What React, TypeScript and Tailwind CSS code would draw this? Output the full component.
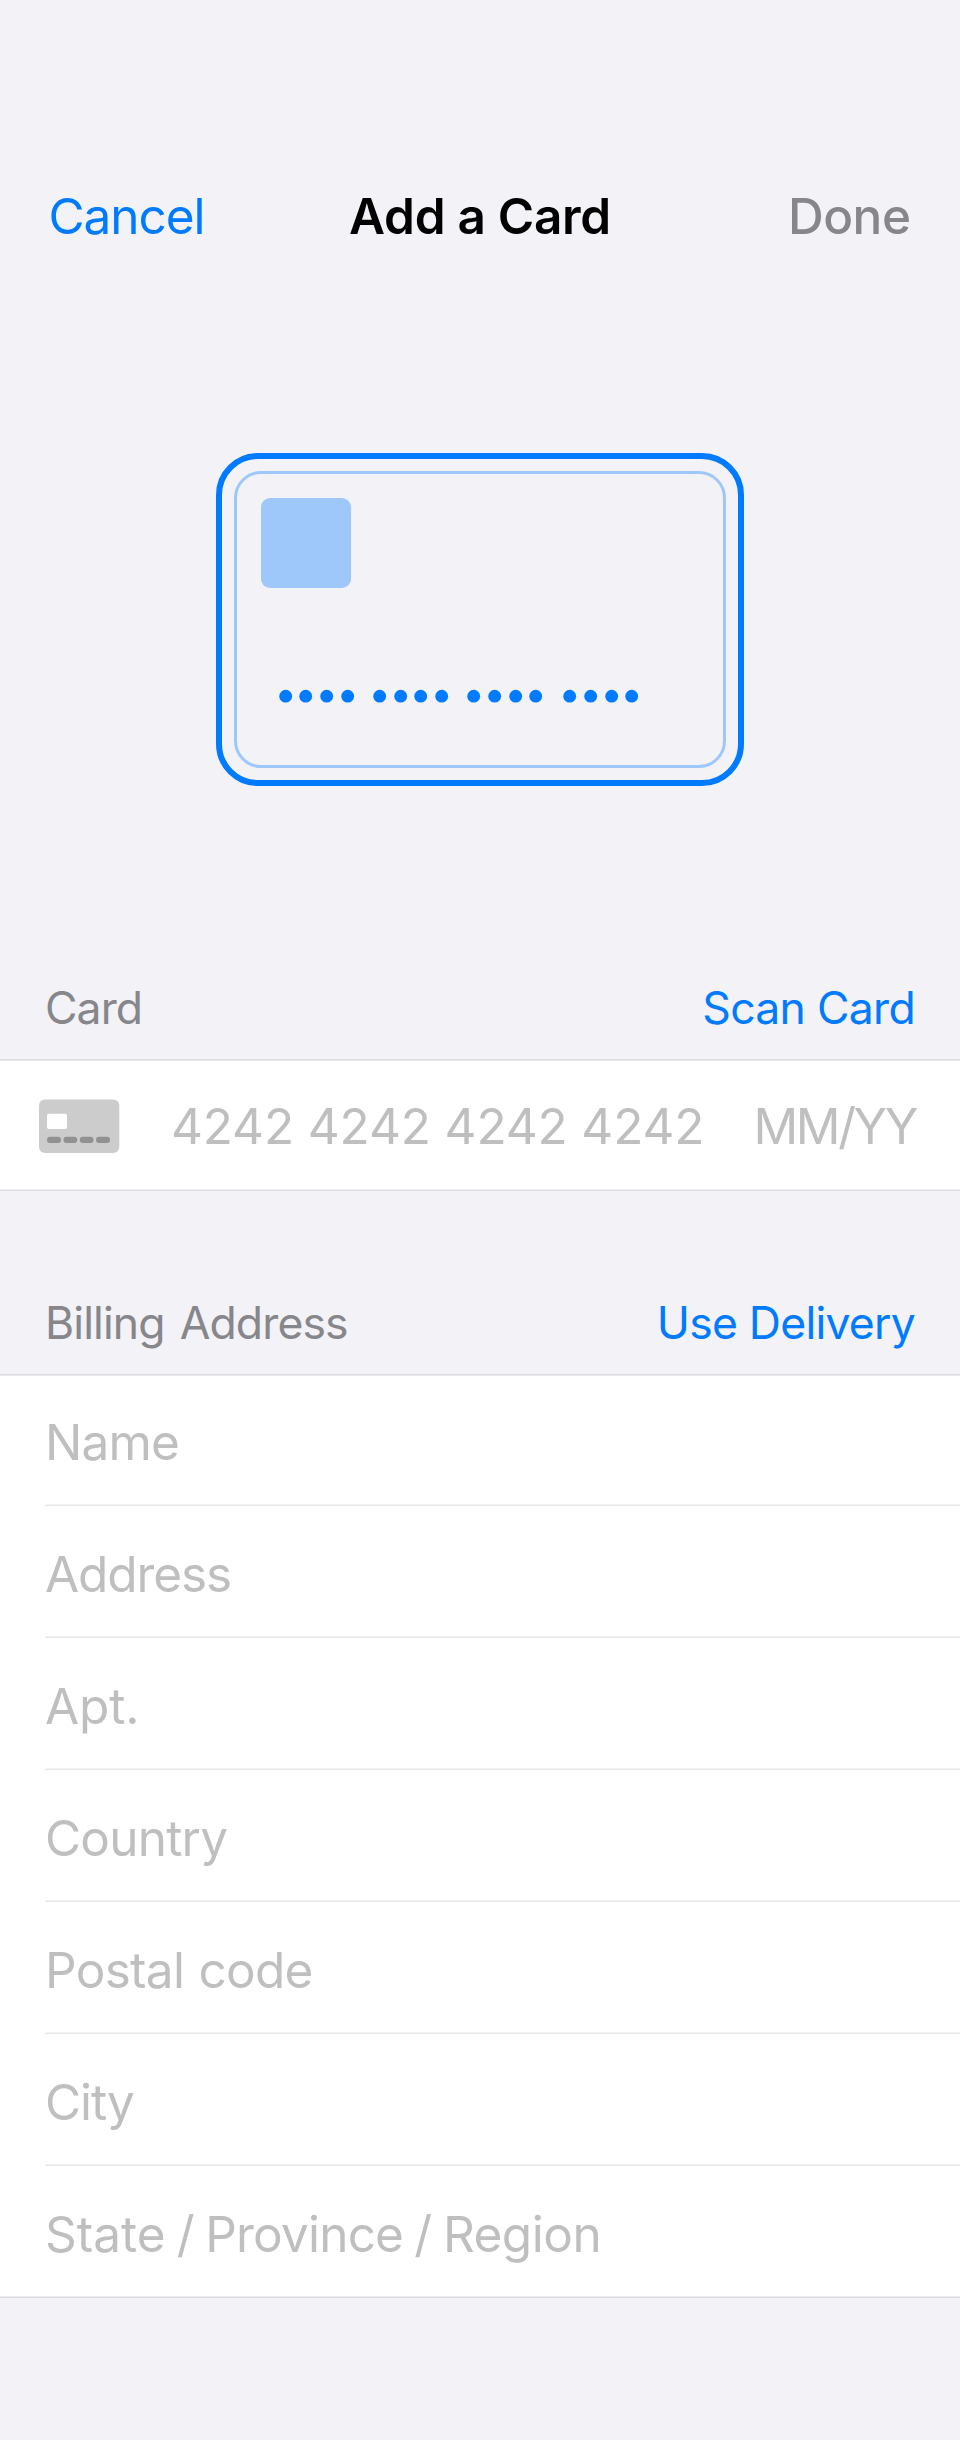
import type { ReactNode } from "react";

type Field = { label: string; tracking: string; content?: ReactNode };

const fields: Field[] = [
  { label: "Name", tracking: "tracking-[-0.8px]" },
  { label: "Address", tracking: "tracking-[-1.1px]" },
  { label: "Apt.", tracking: "tracking-[-0.1px]" },
  { label: "Country", tracking: "tracking-[-0.8px]" },
  { label: "Postal code", tracking: "tracking-[-0.7px] [word-spacing:1px]" },
  { label: "City", tracking: "tracking-[-1.1px]" },
  {
    label: "State / Province / Region",
    tracking: "tracking-[-0.4px] [word-spacing:-2.4px]",
    content: (
      <>
        <span className="tracking-normal">State</span> /{" "}
        <span className="tracking-[-0.8px]">Province</span> /{" "}
        <span className="tracking-[-0.5px]">Region</span>
      </>
    ),
  },
];

function TopEdge() {
  return (
    <>
      <div className="h-px bg-[#dadadf]" />
      <div className="h-px bg-[#e9e9ed]" />
    </>
  );
}

function BottomEdge() {
  return (
    <>
      <div className="h-px bg-[#ececee]" />
      <div className="h-px bg-[#dadadf]" />
    </>
  );
}

function CardArt() {
  const dots = [
    24.7, 44.7, 65.7, 86.7, 118.7, 139.7, 159.7, 180.7, 212.7, 233.7, 254.7,
    274.7, 308.7, 329.7, 350.7, 370.7,
  ];
  return (
    <div className="mx-auto h-[333px] w-[528px] rounded-[42px] border-6 border-[#007aff] p-3">
      <div className="flex h-full flex-col rounded-[27px] border-3 border-[#9fc8fa] pt-6">
        <div className="ml-6 size-[90px] rounded-[9px] bg-[#9fc8fa]" />
        <svg
          className="mt-[98px] ml-6"
          width="420"
          height="20"
          viewBox="0 0 420 20"
          fill="#007aff"
        >
          {dots.map((x) => (
            <circle key={x} cx={x} cy="10.2" r="6.4" />
          ))}
        </svg>
      </div>
    </div>
  );
}

function CardIcon() {
  return (
    <svg className="shrink-0" width="81" height="54" viewBox="0 0 81 54">
      <rect y="0.6" width="80.3" height="53.4" rx="6" fill="#cccccc" />
      <rect x="8" y="14.7" width="20" height="15.3" rx="2" fill="#ffffff" />
      <g fill="#919191">
        <rect x="8" y="37.8" width="14" height="6.2" rx="3" />
        <rect x="24.5" y="37.8" width="13.7" height="6.2" rx="3" />
        <rect x="40.8" y="37.8" width="13.7" height="6.2" rx="3" />
        <rect x="57" y="37.8" width="14" height="6.2" rx="3" />
      </g>
    </svg>
  );
}

export default function App() {
  return (
    <div className="h-[2440px] w-[960px] bg-[#f2f2f7] font-['Inter','Liberation_Sans',sans-serif]">
      <header className="grid grid-cols-3 px-[48.5px] pt-[186px] text-[49.5px] leading-[60px] whitespace-nowrap">
        <button className="text-left tracking-[-1.08px] text-[#007aff]">
          Cancel
        </button>
        <h1 className="text-center font-semibold tracking-[-0.3px] text-black">
          Add a Card
        </h1>
        <button className="pr-px text-right font-medium tracking-[-0.5px] text-[#86868b]">
          Done
        </button>
      </header>

      <div className="pt-[207px]">
        <CardArt />
      </div>

      <section className="pt-[195px]">
        <div className="flex justify-between px-[45px] pb-6 text-[44.5px] leading-[54px]">
          <h2 className="tracking-[-0.9px] text-[#86868b]">Card</h2>
          <button className="tracking-[-0.7px] text-[#007aff]">
            Scan Card
          </button>
        </div>
        <TopEdge />
        <div className="flex h-[128px] items-center bg-white pt-[2px] pr-[44px] pl-[39px] text-[49.5px] leading-[60px] text-[#bfbfbf]">
          <CardIcon />
          <span className="ml-[51px] tracking-[-0.14px]">
            4242 4242 4242 4242
          </span>
          <span className="ml-auto tracking-[-2.4px]">MM/YY</span>
        </div>
        <BottomEdge />
      </section>

      <section className="pt-[105px]">
        <div className="flex justify-between px-[45px] pb-6 text-[44.5px] leading-[54px]">
          <h2 className="tracking-[-0.88px] text-[#86868b] [word-spacing:3.4px]">
            Billing Address
          </h2>
          <button className="tracking-[-0.75px] text-[#007aff]">
            Use Delivery
          </button>
        </div>
        <TopEdge />
        <ul className="bg-white text-[49.5px] leading-[60px] text-[#bfbfbf]">
          {fields.map((f, i) => (
            <li key={f.label}>
              {i > 0 && (
                <div className="ml-[45px]">
                  <div className="h-px bg-[#f4f4f4]" />
                  <div className="h-px bg-[#e8e8e8]" />
                </div>
              )}
              <div
                className={
                  i === 0
                    ? "flex h-[128px] items-end px-[45px] pb-8"
                    : "flex h-[130px] items-end px-[45px] pb-8"
                }
              >
                <span className={f.tracking}>{f.content ?? f.label}</span>
              </div>
            </li>
          ))}
        </ul>
        <BottomEdge />
      </section>
    </div>
  );
}
